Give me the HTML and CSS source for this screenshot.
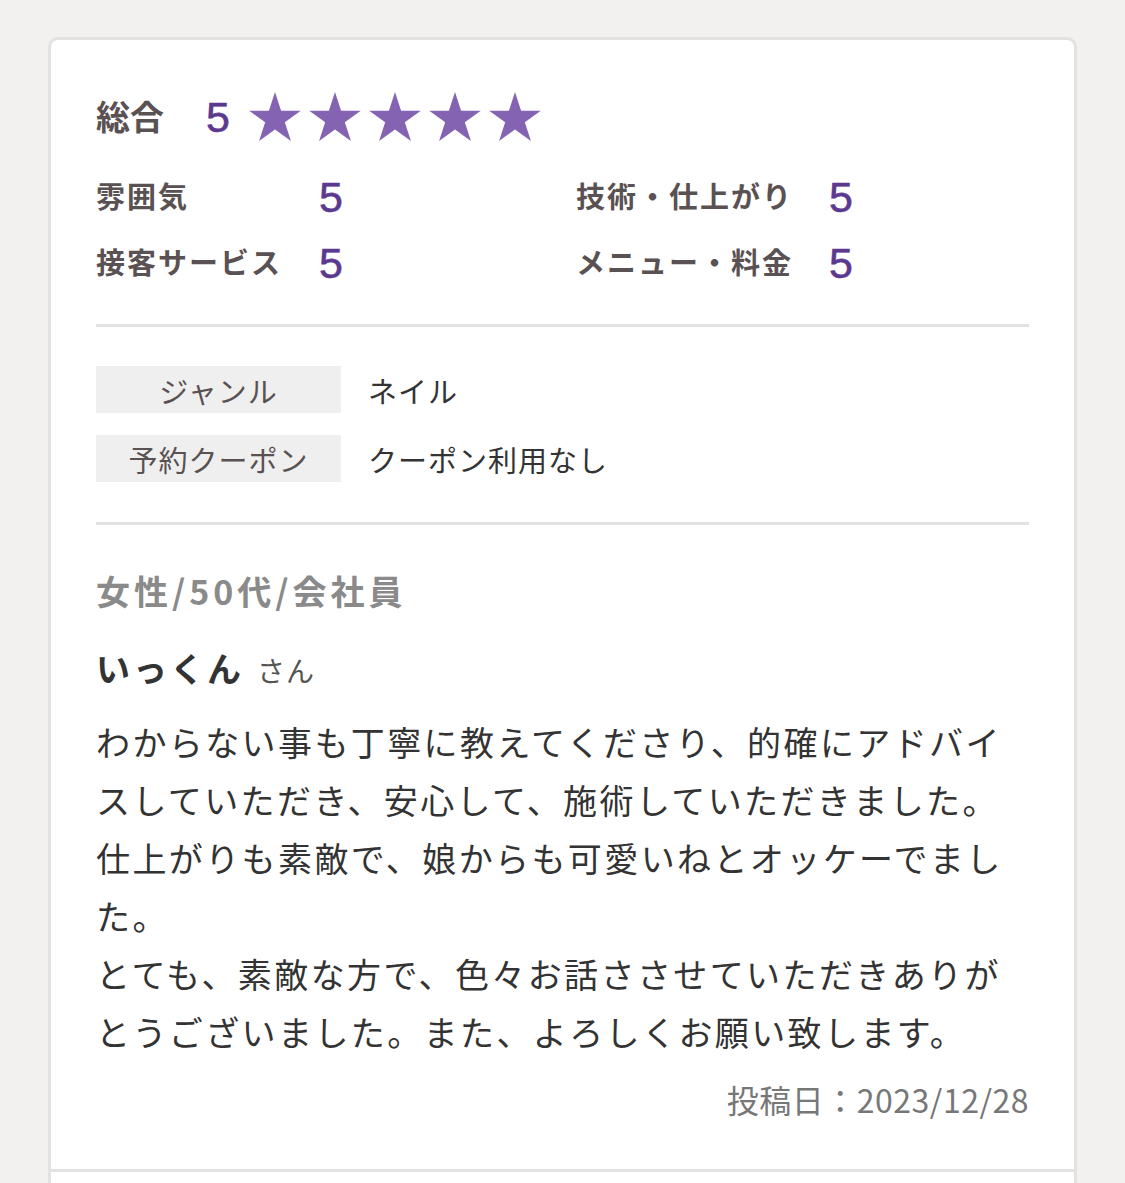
FILE: index.html
```html
<!DOCTYPE html>
<html lang="ja">
<head>
<meta charset="utf-8">
<title>口コミ</title>
<link rel="stylesheet" href="styles.css">
</head>
<body>
<div class="review-list">
  <article class="review">
    <div class="overall">
      <span class="overall-label">総合</span>
      <span class="overall-value">5</span>
      <span class="stars">
        <svg class="star" viewBox="0 0 100 95.1"><polygon points="50,0 61.8,36.33 100,36.33 69.1,58.77 80.9,95.1 50,72.65 19.1,95.1 30.9,58.77 0,36.33 38.2,36.33"/></svg>
        <svg class="star" viewBox="0 0 100 95.1"><polygon points="50,0 61.8,36.33 100,36.33 69.1,58.77 80.9,95.1 50,72.65 19.1,95.1 30.9,58.77 0,36.33 38.2,36.33"/></svg>
        <svg class="star" viewBox="0 0 100 95.1"><polygon points="50,0 61.8,36.33 100,36.33 69.1,58.77 80.9,95.1 50,72.65 19.1,95.1 30.9,58.77 0,36.33 38.2,36.33"/></svg>
        <svg class="star" viewBox="0 0 100 95.1"><polygon points="50,0 61.8,36.33 100,36.33 69.1,58.77 80.9,95.1 50,72.65 19.1,95.1 30.9,58.77 0,36.33 38.2,36.33"/></svg>
        <svg class="star" viewBox="0 0 100 95.1"><polygon points="50,0 61.8,36.33 100,36.33 69.1,58.77 80.9,95.1 50,72.65 19.1,95.1 30.9,58.77 0,36.33 38.2,36.33"/></svg>
      </span>
    </div>
    <div class="sub-ratings">
      <span class="sub-label">雰囲気</span><span class="sub-value">5</span>
      <span class="sub-label">技術・仕上がり</span><span class="sub-value">5</span>
      <span class="sub-label">接客サービス</span><span class="sub-value">5</span>
      <span class="sub-label">メニュー・料金</span><span class="sub-value">5</span>
    </div>
    <hr class="divider">
    <dl class="info">
      <div class="info-row"><dt>ジャンル</dt><dd>ネイル</dd></div>
      <div class="info-row"><dt>予約クーポン</dt><dd>クーポン利用なし</dd></div>
    </dl>
    <hr class="divider divider-2">
    <p class="profile">女性/50代/会社員</p>
    <p class="name">いっくん<span class="honorific">さん</span></p>
    <p class="body">わからない事も丁寧に教えてくださり、的確にアドバイスしていただき、安心して、施術していただきました。<br>仕上がりも素敵で、娘からも可愛いねとオッケーでました。<br>とても、素敵な方で、色々お話ささせていただきありがとうございました。また、よろしくお願い致します。</p>
    <p class="date">投稿日：2023/12/28</p>
  </article>
  <article class="review review-next"></article>
</div>
</body>
</html>
```

FILE: styles.css
```css
html, body {
  margin: 0;
  padding: 0;
  background: #f2f1ef;
}

body {
  font-family: "Noto Sans CJK JP", "Noto Sans", sans-serif;
  color: #333333;
}

.review-list {
  margin: 37px 0 0 48px;
  width: 1029px;
  box-sizing: border-box;
  background: #ffffff;
  border: 3px solid #e2e2e2;
  border-radius: 10px;
}

.review {
  padding: 48px 45px 50px;
  border-bottom: 3px solid #e2e2e2;
}

.review-next {
  height: 200px;
  padding: 0;
  border-bottom: none;
}

.overall {
  display: flex;
  align-items: center;
  height: 56px;
}

.overall-label {
  font-size: 34px;
  font-weight: 700;
  color: #5a5152;
  width: 110px;
  line-height: 1;
}

.overall-value,
.sub-value {
  font-family: "Liberation Sans", Arial, sans-serif;
  font-size: 43px;
  color: #5b3990;
  line-height: 1;
  -webkit-text-stroke: 0.6px #5b3990;
}

.overall-value {
  width: 43px;
  margin-top: 2px;
}

.stars {
  display: flex;
  gap: 8px;
}

.star {
  width: 52px;
  height: 49px;
  fill: #8463b3;
  display: block;
}

.sub-ratings {
  margin-top: 26px;
  display: grid;
  grid-template-columns: 223px 257px 253px auto;
  grid-auto-rows: 50px;
  row-gap: 16px;
  align-items: center;
}

.sub-label {
  font-size: 29px;
  font-weight: 700;
  color: #5a5152;
  letter-spacing: 2px;
  line-height: 1;
}

.sub-value {
  margin-top: 4px;
}

.divider {
  margin: 38px 0 0;
  border: none;
  height: 3px;
  background: #e2e2e2;
}

.info {
  margin: 39px 0 0;
  display: flex;
  flex-direction: column;
  gap: 22px;
}

.info-row {
  display: flex;
  align-items: center;
  height: 47px;
}

.info dt {
  width: 245px;
  height: 47px;
  background: #efefef;
  color: #5a5152;
  font-size: 29px;
  letter-spacing: 1px;
  display: flex;
  align-items: center;
  justify-content: center;
}

.info dd {
  margin: 0 0 0 27px;
  font-size: 29px;
  letter-spacing: 1px;
  color: #333333;
}

.divider-2 {
  margin-top: 40px;
}

.profile {
  margin: 46px 0 0;
  font-size: 34px;
  font-weight: 700;
  color: #8a8a8a;
  line-height: 40px;
  letter-spacing: 4px;
}

.name {
  margin: 35px 0 0;
  font-size: 34px;
  font-weight: 700;
  color: #333333;
  line-height: 44px;
  letter-spacing: 3px;
}

.honorific {
  font-size: 28px;
  font-weight: 400;
  color: #555555;
  margin-left: 13px;
  letter-spacing: 1px;
}

.body {
  margin: 21px 0 0;
  font-size: 34px;
  letter-spacing: 2.4px;
  line-height: 58px;
  color: #333333;
}

.date {
  margin: 18px 0 0;
  text-align: right;
  font-size: 32px;
  line-height: 40px;
  letter-spacing: 0.5px;
  color: #777777;
}
```
